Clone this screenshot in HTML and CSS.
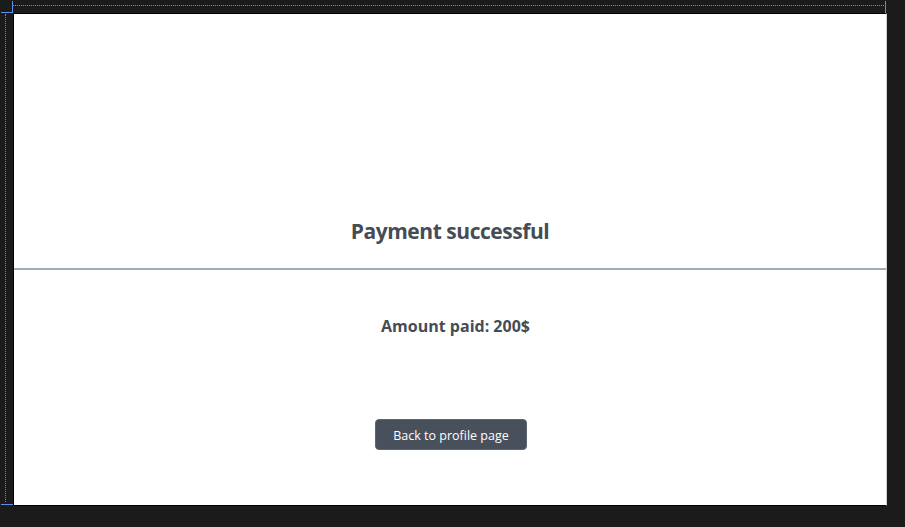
FILE: index.html
```html
<!DOCTYPE html>
<html>
<head>
<meta charset="utf-8">
<link rel="stylesheet" href="styles.css">
</head>
<body>
<div class="frame">
  <div class="guide guide-top"></div>
  <div class="guide guide-left"></div>
  <div class="guide tick-tl-v"></div>
  <div class="guide tick-tl-h"></div>
  <div class="guide tick-bl-h"></div>
  <div class="guide tick-tr-v"></div>
  <main class="panel">
    <h1 class="title">Payment successful</h1>
    <hr class="divider">
    <p class="amount">Amount paid: 200$</p>
    <button class="btn">Back to profile page</button>
  </main>
</div>
</body>
</html>
```
FILE: styles.css
```css
html, body {
  margin: 0;
  padding: 0;
  background: #1b1b1b;
  width: 905px;
  height: 527px;
  overflow: hidden;
}
.frame {
  position: relative;
  padding: 13px 0 0 13px;
  width: 892px;
  height: 514px;
  box-sizing: border-box;
}
.panel {
  width: 872px;
  height: 491px;
  background: #ffffff;
  border-top: 1px solid #000;
  border-left: 1px solid #000;
  border-right: 1px solid #d0d0d0;
  border-bottom: 1px solid #000;
  display: flex;
  flex-direction: column;
  align-items: center;
  font-family: "Open Sans", "Noto Sans", sans-serif;
  color: #464c56;
}
.title {
  margin: 202px 0 22px;
  font-size: 21px;
  line-height: 30px;
  font-weight: 700;
  letter-spacing: -0.45px;
}
.divider {
  width: 100%;
  margin: 0;
  border: 0;
  height: 2px;
  background: #a3abb3;
}
.amount {
  margin: 45px 0 0;
  padding-left: 11px;
  font-size: 16px;
  line-height: 22px;
  font-weight: 700;
  letter-spacing: 0;
}
.btn {
  margin-top: 82px;
  margin-left: 1px;
  width: 152px;
  height: 31px;
  background: #48505c;
  color: #fff;
  border: 1px solid #5d6570;
  border-radius: 4px;
  font-family: "Open Sans", "Noto Sans", sans-serif;
  font-size: 12.5px;
  padding: 2px 0 0 1px;
}
.guide { position: absolute; }
.guide-top {
  left: 13px; top: 5px; width: 871px; height: 0;
  border-top: 1px dotted #5b8ee6;
}
.guide-left {
  left: 5px; top: 14px; width: 0; height: 488px;
  border-left: 1px dotted #5b8ee6;
}
.tick-tl-v { left: 12px; top: 1px; width: 1px; height: 12px; background: #5b8ee6; }
.tick-tl-h { left: 1px; top: 12px; width: 12px; height: 1px; background: #5b8ee6; }
.tick-bl-h { left: 1px; top: 504px; width: 12px; height: 1px; background: #5b8ee6; }
.tick-tr-v { left: 885px; top: 1px; width: 1px; height: 12px; background: #5b8ee6; }
```
